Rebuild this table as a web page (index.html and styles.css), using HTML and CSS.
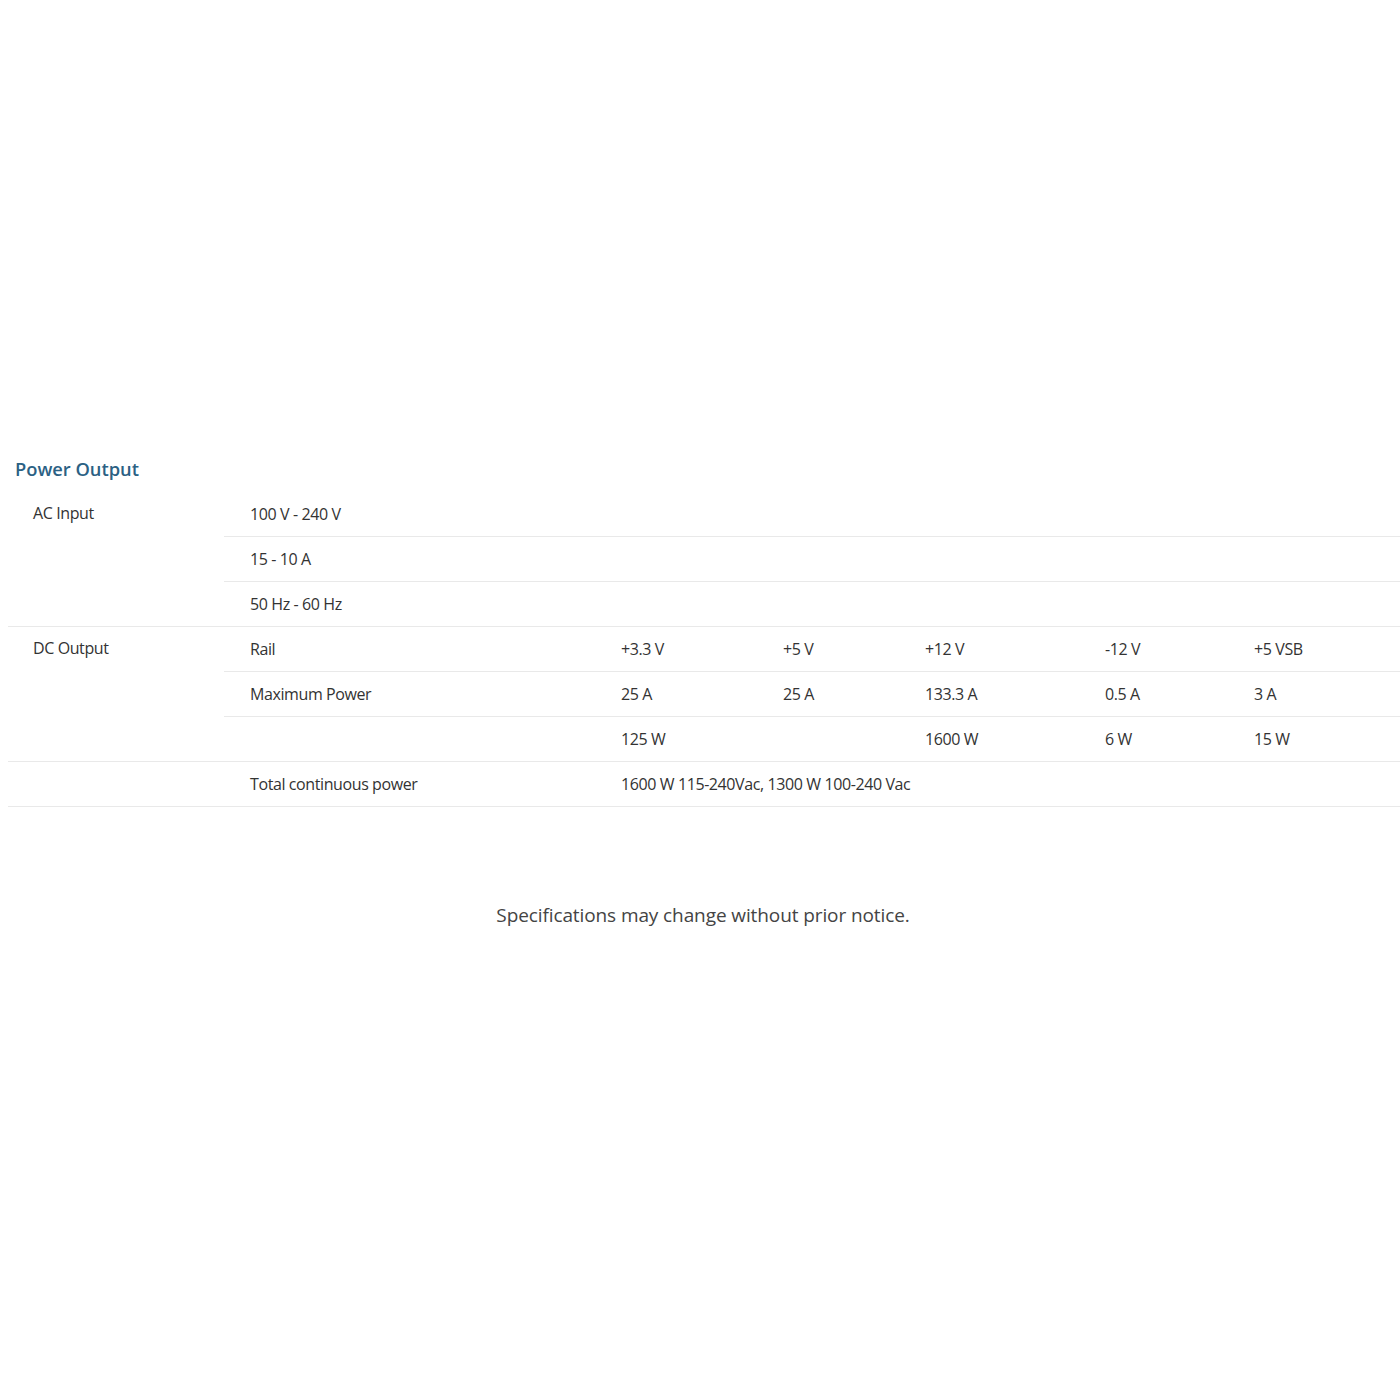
FILE: index.html
```html
<!DOCTYPE html>
<html>
<head>
<meta charset="utf-8">
<link rel="stylesheet" href="styles.css">
</head>
<body>
<div class="page">
  <h2 class="title">Power Output</h2>
  <table class="spec">
    <colgroup>
      <col class="c1"><col class="c2"><col class="c3"><col class="c4"><col class="c5"><col class="c6"><col class="c7">
    </colgroup>
    <tr>
      <td rowspan="3" class="lbl">AC Input</td>
      <td colspan="6">100 V - 240 V</td>
    </tr>
    <tr><td colspan="6">15 - 10 A</td></tr>
    <tr><td colspan="6">50 Hz - 60 Hz</td></tr>
    <tr>
      <td rowspan="3" class="lbl">DC Output</td>
      <td>Rail</td><td>+3.3 V</td><td>+5 V</td><td>+12 V</td><td>-12 V</td><td>+5 VSB</td>
    </tr>
    <tr>
      <td>Maximum Power</td><td>25 A</td><td>25 A</td><td>133.3 A</td><td>0.5 A</td><td>3 A</td>
    </tr>
    <tr>
      <td></td><td>125 W</td><td></td><td>1600 W</td><td>6 W</td><td>15 W</td>
    </tr>
    <tr>
      <td class="lbl"></td>
      <td>Total continuous power</td>
      <td colspan="5">1600 W 115-240Vac, 1300 W 100-240 Vac</td>
    </tr>
  </table>
  <p class="note">Specifications may change without prior notice.</p>
</div>
</body>
</html>
```
FILE: styles.css
```css
html, body {
  margin: 0;
  padding: 0;
  background: #ffffff;
}
.page {
  padding-top: 457px;
  font-family: "Open Sans", "Liberation Sans", sans-serif;
}
.title {
  margin: 0 0 11px 15px;
  font-size: 18.3px;
  line-height: 24px;
  font-weight: 600;
  color: #2b6184;
}
.spec {
  margin-left: 8px;
  width: 1392px;
  border-collapse: collapse;
  table-layout: fixed;
  font-size: 16px;
  line-height: 22px;
  letter-spacing: -0.4px;
  color: #333333;
}
.c1 { width: 216px; }
.c2 { width: 371px; }
.c3 { width: 162px; }
.c4 { width: 142px; }
.c5 { width: 180px; }
.c6 { width: 149px; }
.c7 { width: 172px; }
.spec td {
  height: 44px;
  padding: 0 0 0 26px;
  border-bottom: 1px solid #e9e9e9;
  vertical-align: middle;
  white-space: nowrap;
}
.spec td.lbl {
  padding-left: 25px;
  vertical-align: top;
  padding-top: 10px;
  height: 34px;
}
.note {
  margin: 95px 0 0 0;
  padding-left: 6px;
  text-align: center;
  font-size: 19px;
  letter-spacing: -0.1px;
  color: #444444;
}
```
